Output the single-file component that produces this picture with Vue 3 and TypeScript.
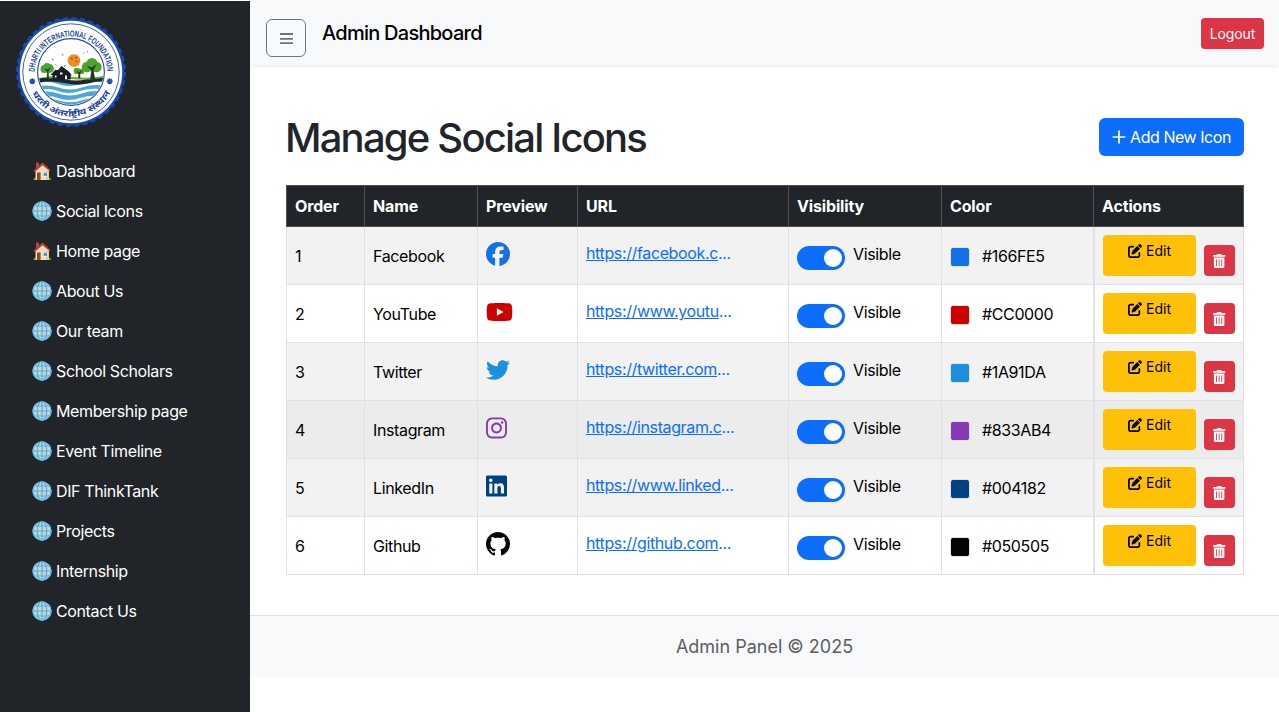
<script setup lang="ts">
interface NavItem {
  label: string
  icon: 'house' | 'globe'
}

interface SocialIcon {
  order: number
  name: string
  url: string
  color: string
  viewBox: string
  width: number
  path: string
  hovered?: boolean
}

const navItems: NavItem[] = [
  { label: 'Dashboard', icon: 'house' },
  { label: 'Social Icons', icon: 'globe' },
  { label: 'Home page', icon: 'house' },
  { label: 'About Us', icon: 'globe' },
  { label: 'Our team', icon: 'globe' },
  { label: 'School Scholars', icon: 'globe' },
  { label: 'Membership page', icon: 'globe' },
  { label: 'Event Timeline', icon: 'globe' },
  { label: 'DIF ThinkTank', icon: 'globe' },
  { label: 'Projects', icon: 'globe' },
  { label: 'Internship', icon: 'globe' },
  { label: 'Contact Us', icon: 'globe' },
]

const columns: string[] = ['Order', 'Name', 'Preview', 'URL', 'Visibility', 'Color', 'Actions']

const icons: SocialIcon[] = [
  {
    order: 1, name: 'Facebook', url: 'https://facebook.c', color: '#166FE5', viewBox: '0 0 512 512', width: 24,
    path: 'M512 256C512 114.6 397.4 0 256 0S0 114.6 0 256C0 376 82.7 476.8 194.2 504.5V334.2H141.4V256h52.8V222.3c0-87.1 39.4-127.5 125-127.5c16.2 0 44.2 3.2 55.7 6.4V172c-6-.6-16.5-1-29.6-1c-42 0-58.2 15.9-58.2 57.2V256h83.6l-14.4 78.2H287V510.1C413.8 494.8 512 386.9 512 256z',
  },
  {
    order: 2, name: 'YouTube', url: 'https://www.youtu', color: '#CC0000', viewBox: '0 0 576 512', width: 27,
    path: 'M549.655 124.083c-6.281-23.65-24.787-42.276-48.284-48.597C458.781 64 288 64 288 64S117.22 64 74.629 75.486c-23.497 6.322-42.003 24.947-48.284 48.597-11.412 42.867-11.412 132.305-11.412 132.305s0 89.438 11.412 132.305c6.281 23.65 24.787 41.5 48.284 47.821C117.22 448 288 448 288 448s170.78 0 213.371-11.486c23.497-6.321 42.003-24.171 48.284-47.821 11.412-42.867 11.412-132.305 11.412-132.305s0-89.438-11.412-132.305zm-317.51 213.508V175.185l142.739 81.205-142.739 81.201z',
  },
  {
    order: 3, name: 'Twitter', url: 'https://twitter.com', color: '#1A91DA', viewBox: '0 0 512 512', width: 24,
    path: 'M459.37 151.716c.325 4.548.325 9.097.325 13.645 0 138.72-105.583 298.558-298.558 298.558-59.452 0-114.68-17.219-161.137-47.106 8.447.974 16.568 1.299 25.34 1.299 49.055 0 94.213-16.568 130.274-44.832-46.132-.975-84.792-31.188-98.112-72.772 6.498.974 12.995 1.624 19.818 1.624 9.421 0 18.843-1.3 27.614-3.573-48.081-9.747-84.143-51.98-84.143-102.985v-1.299c13.969 7.797 30.214 12.67 47.431 13.319-28.264-18.843-46.781-51.005-46.781-87.391 0-19.492 5.197-37.36 14.294-52.954 51.655 63.675 129.3 105.258 216.365 109.807-1.624-7.797-2.599-15.918-2.599-24.04 0-57.828 46.782-104.934 104.934-104.934 30.213 0 57.502 12.67 76.67 33.137 23.715-4.548 46.456-13.32 66.599-25.34-7.798 24.366-24.366 44.833-46.132 57.827 21.117-2.273 41.584-8.122 60.426-16.243-14.292 20.791-32.161 39.308-52.628 54.253z',
  },
  {
    order: 4, name: 'Instagram', url: 'https://instagram.c', color: '#833AB4', viewBox: '0 0 448 512', width: 21, hovered: true,
    path: 'M224.1 141c-63.6 0-114.9 51.3-114.9 114.9s51.3 114.9 114.9 114.9S339 319.5 339 255.9 287.7 141 224.1 141zm0 189.6c-41.1 0-74.7-33.5-74.7-74.7s33.5-74.7 74.7-74.7 74.7 33.5 74.7 74.7-33.6 74.7-74.7 74.7zm146.4-194.3c0 14.9-12 26.8-26.8 26.8-14.9 0-26.8-12-26.8-26.8s12-26.8 26.8-26.8 26.8 12 26.8 26.8zm76.1 27.2c-1.7-35.9-9.9-67.7-36.2-93.9-26.2-26.2-58-34.4-93.9-36.2-37-2.1-147.9-2.1-184.9 0-35.8 1.7-67.6 9.9-93.9 36.1s-34.4 58-36.2 93.9c-2.1 37-2.1 147.9 0 184.9 1.7 35.9 9.9 67.7 36.2 93.9s58 34.4 93.9 36.2c37 2.1 147.9 2.1 184.9 0 35.9-1.7 67.7-9.9 93.9-36.2 26.2-26.2 34.4-58 36.2-93.9 2.1-37 2.1-147.8 0-184.8zM398.8 388c-7.8 19.6-22.9 34.7-42.6 42.6-29.5 11.7-99.5 9-132.1 9s-102.7 2.6-132.1-9c-19.6-7.8-34.7-22.9-42.6-42.6-11.7-29.5-9-99.5-9-132.1s-2.6-102.7 9-132.1c7.8-19.6 22.9-34.7 42.6-42.6 29.5-11.7 99.5-9 132.1-9s102.7-2.6 132.1 9c19.6 7.8 34.7 22.9 42.6 42.6 11.7 29.5 9 99.5 9 132.1s2.7 102.7-9 132.1z',
  },
  {
    order: 5, name: 'LinkedIn', url: 'https://www.linked', color: '#004182', viewBox: '0 0 448 512', width: 21,
    path: 'M416 32H31.9C14.3 32 0 46.5 0 64.3v383.4C0 465.5 14.3 480 31.9 480H416c17.6 0 32-14.5 32-32.3V64.3c0-17.8-14.4-32.3-32-32.3zM135.4 416H69V202.2h66.5V416zm-33.2-243c-21.3 0-38.5-17.3-38.5-38.5S80.9 96 102.2 96c21.2 0 38.5 17.3 38.5 38.5 0 21.3-17.2 38.5-38.5 38.5zm282.1 243h-66.4V312c0-24.8-.5-56.7-34.5-56.7-34.6 0-39.9 27-39.9 54.9V416h-66.4V202.2h63.7v29.2h.9c8.9-16.8 30.6-34.5 62.9-34.5 67.2 0 79.7 44.3 79.7 101.9V416z',
  },
  {
    order: 6, name: 'Github', url: 'https://github.com', color: '#050505', viewBox: '0 0 16 16', width: 24,
    path: 'M8 0C3.58 0 0 3.58 0 8c0 3.54 2.29 6.53 5.47 7.59.4.07.55-.17.55-.38 0-.19-.01-.82-.01-1.49-2.01.37-2.53-.49-2.69-.94-.09-.23-.48-.94-.82-1.13-.28-.15-.68-.52-.01-.53.63-.01 1.08.58 1.23.82.72 1.21 1.87.87 2.33.66.07-.52.28-.87.51-1.07-1.78-.2-3.64-.89-3.64-3.95 0-.87.31-1.59.82-2.15-.08-.2-.36-1.02.08-2.12 0 0 .67-.21 2.2.82.64-.18 1.32-.27 2-.27s1.36.09 2 .27c1.53-1.04 2.2-.82 2.2-.82.44 1.1.16 1.92.08 2.12.51.56.82 1.27.82 2.15 0 3.07-1.87 3.75-3.65 3.95.29.25.54.73.54 1.48 0 1.07-.01 1.93-.01 2.2 0 .21.15.46.55.38A8.01 8.01 0 0 0 16 8c0-4.42-3.58-8-8-8z',
  },
]
</script>

<template>
  <div class="layout">
    <aside class="sidebar">
      <svg class="logo" viewBox="0 0 110 110" width="110" height="110">
        <defs>
          <path id="ring-top" d="M18.500 56a36.500 36.500 0 0 1 73 0" />
          <path id="ring-bottom" d="M10.500 55a44.500 44.500 0 0 0 89 0" />
          <clipPath id="scene"><circle cx="55" cy="55" r="32.6" /></clipPath>
        </defs>
        <circle cx="55" cy="55" r="53.4" fill="#1c48b4" />
        <circle cx="55" cy="55" r="53.4" fill="none" stroke="#1c48b4" stroke-width="3" stroke-dasharray="5 3.39" />
        <circle cx="55" cy="55" r="51.2" fill="#fff" />
        <circle cx="55" cy="55" r="48.2" fill="none" stroke="#2b50b0" stroke-width=".9" />
        <circle cx="55" cy="55" r="33.4" fill="#fff" stroke="#24499f" stroke-width="1.1" />
        <g clip-path="url(#scene)">
          <rect x="20" y="64" width="70" height="30" fill="#4ba6df" />
          <path d="M20 67q12-4 22 0t22 0 28-1v3.400q-14-3-26 1t-24 0-22 0zM20 74q12-4 22 0t22 0 28-1v2.400q-14-3-26 1t-24 0-22 0zM20 81q12-4 22 0t22 0 28-1v2.200q-14-3-26 1t-24 0-22 0z" fill="#fff" />
          <path d="M20 62q14-3 28 0t22 0 22-1v3q-10 0-20 2.500t-24-.5-28 0z" fill="#20252a" />
          <path d="M23 61q20-4 34-1 18 2 30-1v2q-18 3-32 1z" fill="#65aa3c" />
        </g>
        <circle cx="58" cy="43.500" r="6.300" fill="#f58a1f" />
        <path d="M54.800 41.500l2 .6M59 41l2-.8M60 44.500l1.500-.5M36 42l1.500 1M46 37l1 1.500M39.500 47.500l1 .6M67.500 36.500l1-1M71 35l1-.5M48.500 50l1-2" stroke="#333" stroke-width=".8" />
        <g fill="#4ba32b">
          <circle cx="28.500" cy="52" r="4" /><circle cx="33.500" cy="51.500" r="4.400" /><circle cx="31" cy="49.500" r="3.400" />
          <circle cx="61" cy="54" r="3.300" /><circle cx="65.500" cy="54.500" r="2.800" />
          <circle cx="71" cy="50" r="5.200" /><circle cx="76" cy="46.500" r="5.500" /><circle cx="80.500" cy="50" r="5.200" />
        </g>
        <path d="M31 62l.4-8-2.400-2 2.700.8 2.500-2-2 3 .5 8zM62.500 61l.2-4.500-1.700-2 2.300 1 2-1.500-1.400 2.500.2 4.500zM74.500 62l1-9-4-3.500 4.400 1.500 4.300-3-3 4.500 1.500 9.500z" fill="#243021" stroke="#243021" stroke-width=".5" />
        <path d="M34.500 58l4.500-5h3l3.500-4 7 5.200 3.500 4h-1.300v4.300H36.500V58z" fill="#171d22" />
        <path d="M44 55.500h2.500v2H44zM39 58.500h1.500v2H39zM49 58.500h2v3.500h-2z" fill="#f7f7f2" />
        <g stroke="#254fae" stroke-width="1.500" fill="none">
          <path d="M16.300 61.300v6M13.300 64.300h6M14.200 62.200l4.200 4.200M18.400 62.200l-4.200 4.200" />
          <path d="M93.700 61.300v6M90.700 64.300h6M91.600 62.200l4.200 4.200M95.800 62.200l-4.200 4.200" />
        </g>
        <text class="seal seal-latin">
          <textPath href="#ring-top" startOffset="1" textLength="112" lengthAdjust="spacingAndGlyphs">DHARTI INTERNATIONAL FOUNDATION</textPath>
        </text>
        <text class="seal seal-hindi">
          <textPath href="#ring-bottom" startOffset="22" textLength="96" lengthAdjust="spacingAndGlyphs">धरती अंतर्राष्ट्रीय संस्थान</textPath>
        </text>
      </svg>

      <nav class="nav">
        <a v-for="item in navItems" :key="item.label" class="nav-link">
          <svg v-if="item.icon === 'house'" class="emoji" viewBox="0 0 20 20" width="20" height="20">
            <path d="M2 17.500q2-2 4 0h9q2-2 4 .2v1.300H1z" fill="#6d9a35" />
            <path d="M3.500 9L10.500 3l6.500 6v10H3.500z" fill="#f4dfb4" />
            <path d="M14 9.500l3-.5v10h-3z" fill="#e5c792" />
            <path d="M4 1.500h3V6L4 8z" fill="#b4473a" />
            <path d="M1.500 9.800L9.800 2l1.400.1 7.400 7-.8 1.200-7.200-6.100L2.600 11z" fill="#c9382c" />
            <path d="M5 11.500h3.600V19H5z" fill="#8b4a32" />
            <path d="M11 11h4.600v4.500H11z" fill="#fff" />
            <path d="M11.500 11.500h3.700v3.500h-3.700z" fill="#479bd3" />
          </svg>
          <svg v-else class="emoji" viewBox="0 0 20 20" width="20" height="20">
            <circle cx="10" cy="10" r="9.700" fill="#5fb4d6" />
            <circle cx="10" cy="10" r="8.600" fill="#c3d6de" />
            <path d="M10 .8v18.400M.8 10h18.400M2.500 5h15M2.500 15h15" stroke="#58aed2" stroke-width="1.200" />
            <ellipse cx="10" cy="10" rx="4.800" ry="9.300" fill="none" stroke="#58aed2" stroke-width="1.200" />
            <circle cx="10" cy="10" r="9" fill="none" stroke="#68bddd" stroke-width="1.200" />
          </svg>
          <span>{{ item.label }}</span>
        </a>
      </nav>
    </aside>

    <div class="main">
      <header class="topbar">
        <button class="menu-btn" aria-label="Menu">
          <svg viewBox="0 0 13 12" width="13" height="12">
            <path d="M0 1h13M0 5.800h13M0 10.200h13" stroke="#6c757d" stroke-width="1.800" />
          </svg>
        </button>
        <span class="brand">Admin Dashboard</span>
        <button class="btn logout">Logout</button>
      </header>

      <main class="content">
        <div class="heading">
          <h1>Manage Social Icons</h1>
          <button class="btn add">
            <svg viewBox="0 0 14 14" width="14" height="14"><path d="M7 .5v13M.5 7h13" stroke="#fff" stroke-width="1.700" /></svg>
            <span>Add New Icon</span>
          </button>
        </div>

        <table class="table">
          <thead>
            <tr>
              <th v-for="column in columns" :key="column">{{ column }}</th>
            </tr>
          </thead>
          <tbody>
            <tr v-for="icon in icons" :key="icon.order" :class="{ hovered: icon.hovered }">
              <td>{{ icon.order }}</td>
              <td>{{ icon.name }}</td>
              <td class="preview">
                <svg :viewBox="icon.viewBox" :width="icon.width" height="24"><path :d="icon.path" :fill="icon.color" /></svg>
              </td>
              <td class="url"><a>{{ icon.url }}</a><span>...</span></td>
              <td class="visibility">
                <span class="switch"></span>
                <span class="switch-label">Visible</span>
              </td>
              <td class="color">
                <span class="swatch" :style="{ backgroundColor: icon.color }"></span>
                <span>{{ icon.color }}</span>
              </td>
              <td class="actions">
                <button class="btn edit">
                  <svg viewBox="0 0 512 512" width="14" height="14">
                    <path fill="#000" d="M471.6 21.7c-21.9-21.9-57.3-21.9-79.2 0L362.3 51.7l97.9 97.9 30.1-30.1c21.9-21.9 21.9-57.3 0-79.2L471.6 21.7zm-299.2 220c-6.1 6.1-10.8 13.6-13.5 21.9l-29.6 88.8c-2.9 8.6-.6 18.1 5.8 24.6s15.9 8.7 24.6 5.8l88.8-29.6c8.2-2.7 15.7-7.4 21.9-13.500L437.7 172.3 339.7 74.3 172.4 241.7zM96 64C43 64 0 107 0 160V416c0 53 43 96 96 96H352c53 0 96-43 96-96V320c0-17.7-14.3-32-32-32s-32 14.3-32 32v96c0 17.7-14.3 32-32 32H96c-17.7 0-32-14.3-32-32V160c0-17.7 14.3-32 32-32h96c17.7 0 32-14.3 32-32s-14.3-32-32-32H96z" />
                  </svg>
                  <span>Edit</span>
                </button>
                <button class="btn remove" aria-label="Delete">
                  <svg viewBox="0 0 448 512" width="12.25" height="14">
                    <path fill="#fff" d="M32 464a48 48 0 0 0 48 48h288a48 48 0 0 0 48-48V128H32zm272-256a16 16 0 0 1 32 0v224a16 16 0 0 1-32 0zm-96 0a16 16 0 0 1 32 0v224a16 16 0 0 1-32 0zm-96 0a16 16 0 0 1 32 0v224a16 16 0 0 1-32 0zM432 32H312l-9.4-18.7A24 24 0 0 0 281.1 0H166.8a23.72 23.72 0 0 0-21.4 13.3L136 32H16A16 16 0 0 0 0 48v32a16 16 0 0 0 16 16h416a16 16 0 0 0 16-16V48a16 16 0 0 0-16-16z" />
                  </svg>
                </button>
              </td>
            </tr>
          </tbody>
        </table>
      </main>

      <footer class="footer">Admin Panel © 2025</footer>
    </div>
  </div>
</template>

<style>
body {
  margin: 0;
  overflow: hidden;
  background: #fff;
}
</style>

<style scoped>
* {
  box-sizing: border-box;
}

.layout {
  display: flex;
  height: 712px;
  padding-top: 1px;
  font-family: Inter, "Liberation Sans", sans-serif;
  font-size: 16px;
  line-height: 24px;
  letter-spacing: -0.37px;
  color: #000;
}

.sidebar {
  flex: none;
  width: 250px;
  padding: 16px;
  background: #212529;
}

.logo {
  display: block;
  overflow: visible;
}

.seal {
  fill: #20469f;
  letter-spacing: 0;
}

.seal-latin {
  font: bold 8.6px "Liberation Sans", sans-serif;
}

.seal-hindi {
  font: bold 8.5px "Noto Sans", "Noto Sans Devanagari", sans-serif;
}

.nav {
  display: flex;
  flex-direction: column;
  padding: 24px 16px 0;
}

.nav-link {
  display: flex;
  align-items: center;
  gap: 4px;
  height: 40px;
  color: #fff;
  white-space: nowrap;
}

.emoji {
  flex: none;
}

.main {
  flex: 1;
  min-width: 0;
  background: #fff;
}

.topbar {
  display: flex;
  align-items: flex-start;
  height: 64px;
  padding: 17px 15px 0 16px;
  background: #f8f9fb;
  box-shadow: 0 2px 4px rgba(0, 0, 0, 0.075);
}

.menu-btn {
  display: flex;
  align-items: center;
  justify-content: center;
  width: 40px;
  height: 38px;
  margin-top: 1px;
  padding: 2px 0 0;
  border: 1px solid #6c757d;
  border-radius: 6px;
  background: transparent;
}

.brand {
  margin: 3px 0 0 16px;
  font-size: 20px;
  font-weight: 500;
  letter-spacing: -0.74px;
}

.btn {
  display: flex;
  align-items: center;
  justify-content: center;
  padding: 0;
  border: 0;
  border-radius: 4px;
  font: inherit;
  letter-spacing: inherit;
  color: #fff;
}

.logout {
  width: 63px;
  height: 31px;
  margin-left: auto;
  background: #dc3545;
  font-size: 14px;
  letter-spacing: -0.1px;
}

.content {
  padding: 49px 35px 40px 36px;
}

.heading {
  display: flex;
  align-items: center;
  justify-content: space-between;
  height: 48px;
  margin-bottom: 23px;
}

h1 {
  margin: 0 0 0 -1px;
  font-size: 40px;
  font-weight: 500;
  line-height: 48px;
  letter-spacing: -1.8px;
  color: #212529;
}

.add {
  gap: 4px;
  width: 145px;
  height: 38px;
  margin-top: -2px;
  border-radius: 6px;
  background: #0d6efd;
  letter-spacing: -0.45px;
}

.table {
  display: block;
  width: 958px;
}

thead,
tbody {
  display: block;
}

tr {
  display: grid;
  grid-template-columns: 78px 113px 100px 211px 153px 152px 151px;
  height: 58px;
}

th,
td {
  display: flex;
  align-items: center;
  padding: 0 8px;
  border: solid #dee2e6;
  border-width: 0 0 1px 1px;
}

th:last-child,
td:last-child {
  border-right-width: 1px;
}

thead tr {
  height: 42px;
}

th {
  border-color: #4d5154;
  border-top-width: 1px;
  background: #212529;
  color: #fff;
  font-weight: 700;
  letter-spacing: -0.15px;
}

td {
  padding-top: 1px;
}

tbody tr:nth-child(odd) {
  background: #f2f2f2;
}

tbody tr.hovered {
  background: #ececec;
}

.preview {
  align-items: flex-start;
  padding-top: 15px;
}

.url {
  align-items: flex-start;
  padding-top: 14px;
  color: #0d6efd;
}

.url a {
  text-decoration: underline;
}

.visibility {
  align-items: flex-start;
  gap: 8px;
  padding-top: 15px;
}

.switch {
  display: flex;
  align-items: center;
  justify-content: flex-end;
  width: 48px;
  height: 24px;
  margin-top: 4px;
  padding-right: 3px;
  border-radius: 12px;
  background: #0d6efd;
}

.switch::before {
  content: "";
  width: 18px;
  height: 18px;
  border-radius: 50%;
  background: #fff;
}

.color {
  gap: 12px;
}

.swatch {
  width: 20px;
  height: 20px;
  margin-top: 2px;
  border: 1px solid #dee2e6;
  border-radius: 3px;
}

.actions {
  align-items: flex-end;
  gap: 8px;
  padding: 0 8px 8px;
  border-left-width: 2px;
}

.edit {
  align-items: flex-start;
  gap: 4px;
  width: 93px;
  height: 41px;
  padding-top: 9px;
  background: #ffc107;
  color: #000;
  font-size: 14px;
  line-height: 14px;
  letter-spacing: 0;
}

.remove {
  width: 31px;
  height: 31px;
  background: #dc3545;
}

.footer {
  height: 62px;
  border-top: 1px solid #dee2e6;
  background: #f8f9fb;
  color: #5c5e60;
  font-size: 18px;
  line-height: 61px;
  letter-spacing: 0;
  text-align: center;
}
</style>
